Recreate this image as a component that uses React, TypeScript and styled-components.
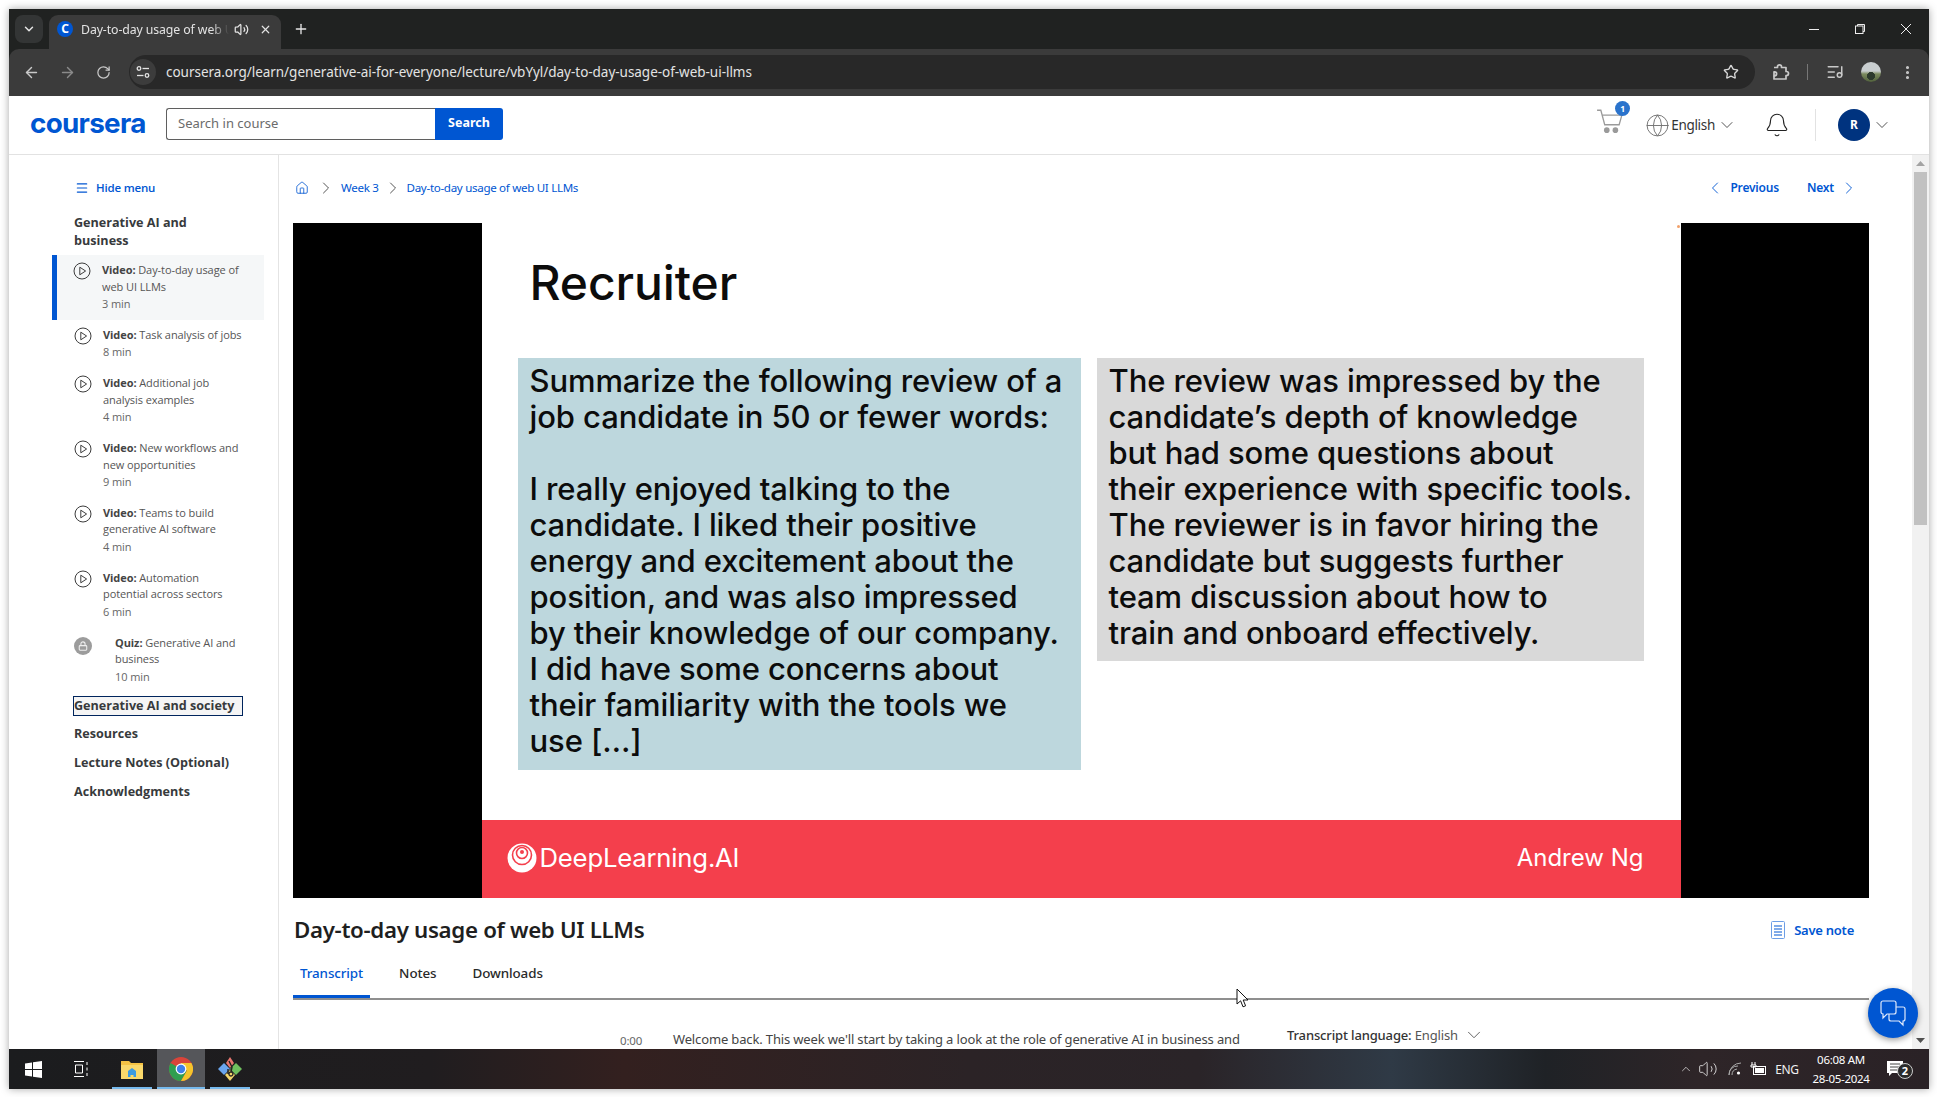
import React from "react";
import styled, { createGlobalStyle } from "styled-components";
import {
  ArrowLeft, ArrowRight, RotateCw, Star, ListMusic, MoreVertical, ChevronDown,
  ChevronRight, ChevronLeft, Plus, X, Volume2, Menu, Globe, Bell, Home, ChevronUp, Lock,
} from "lucide-react";

const Global = createGlobalStyle`
  html, body { margin: 0; padding: 0; background: #fff; overflow: hidden; }
  * { box-sizing: border-box; }
  body { font-family: "Open Sans", "Noto Sans", sans-serif; }
`;
const Page = styled.div`width:1937px;height:1097px;padding:9px 8px 8px 9px;background:#fff;`;
const Win = styled.div`
  position:relative;width:1920px;height:1080px;display:flex;flex-direction:column;overflow:hidden;
  box-shadow:0 0 8px rgba(0,0,0,.35);background:#202221;
`;
/* ---------- browser chrome ---------- */
const TabStrip = styled.div`height:40px;flex:none;display:flex;align-items:flex-start;padding:6px 0 0 6px;background:#202221;color:#e6e6e6;`;
const TabList = styled.div`width:28px;height:28px;border-radius:8px;background:#333535;display:flex;align-items:center;justify-content:center;margin-right:6px;`;
const Tab = styled.div`width:232px;height:34px;background:#3b3b3b;border-radius:9px 9px 0 0;display:flex;align-items:center;padding:0 0 6px 8px;font:12.3px "Noto Sans",sans-serif;color:#e3e3e3;`;
const Favicon = styled.span`width:16px;height:16px;border-radius:50%;background:#0056d2;color:#fff;font:700 12px/16px "Noto Sans",sans-serif;text-align:center;flex:none;`;
const TabTitle = styled.span`width:148px;margin-left:8px;white-space:nowrap;letter-spacing:-.1px;-webkit-mask-image:linear-gradient(90deg,#000 88%,transparent);`;
const TabBtn = styled.span`display:flex;width:24px;justify-content:center;`;
const NewTab = styled.span`display:flex;margin:6px 0 0 12px;`;
const WinControls = styled.div`margin:-6px 0 0 auto;display:flex;`;
const WinControl = styled.div`width:46px;height:40px;display:flex;align-items:center;justify-content:center;`;
const Toolbar = styled.div`height:47px;flex:none;background:#3b3b3b;display:flex;align-items:center;padding:0 4px 1px;border-radius:10px 10px 0 0;color:#c9c9c9;`;
const ToolBtn = styled.span<{ $dim?: boolean; $gap?: number }>`width:36px;height:36px;display:flex;align-items:center;justify-content:center;color:${p => (p.$dim ? "#8a8a8a" : "#c9c9c9")};flex:none;margin-left:${p => p.$gap ?? 0}px;`;
const Address = styled.div`flex:1;height:34px;margin-left:8px;background:#282828;border-radius:17px;display:flex;align-items:center;padding-left:1px;color:#e3e3e3;`;
const SiteChip = styled.span`width:26px;height:26px;border-radius:50%;background:#3c3c3c;display:flex;align-items:center;justify-content:center;flex:none;`;
const Url = styled.span`margin-left:10px;font:13.5px "Noto Sans",sans-serif;white-space:nowrap;color:#e3e3e3;letter-spacing:-.03px;`;
const AddrStar = styled.span`margin-left:auto;margin-right:16px;display:flex;color:#d8d8d8;`;
const ToolSep = styled.span`width:1px;height:16px;background:#777;margin:0 9px 0 8px;flex:none;`;
const ProfilePic = styled.span`width:20px;height:20px;border-radius:50%;background:radial-gradient(circle at 50% 70%,#2d3a2d 0 22%,transparent 24%),linear-gradient(#c9ced0 0 45%,#7b8a5e 60%,#50603c);`;
/* ---------- Coursera header ---------- */
const SiteHeader = styled.header`height:59px;flex:none;background:#fff;border-bottom:1.5px solid #e2e2e2;display:flex;align-items:center;padding:0 37px 0 22px;`;
const Logo = styled.div`width:135px;font:700 27.8px/30px "Inter",sans-serif;letter-spacing:-.7px;color:#0056d2;margin:-5px 0 0 -1px;flex:none;`;
const SearchInput = styled.div`width:269px;height:32px;border:1px solid #5f5f5f;border-right:0;border-radius:3px 0 0 3px;padding-left:11px;font:13px/29px "Noto Sans",sans-serif;color:#6b6b6b;margin:0 0 3px 1px;`;
const SearchBtn = styled.div`width:68px;height:32px;background:#0056d2;color:#fff;border-radius:0 3px 3px 0;font:700 12.5px/30px "Noto Sans",sans-serif;text-align:center;margin-bottom:3px;`;
const HeadRight = styled.div`margin-left:auto;display:flex;align-items:center;color:#333;`;
const CartWrap = styled.div`position:relative;width:28px;height:28px;margin-top:-9px;`;
const CartBadge = styled.span`position:absolute;left:19px;top:-6px;width:15px;height:15px;border-radius:50%;background:#2a73cc;color:#fff;font:700 8.5px/15px "Noto Sans",sans-serif;text-align:center;`;
const GlobeIcon = styled.span`display:flex;margin-left:21px;color:#6f6f6f;`;
const Lang = styled.span`font:13.5px "Noto Sans",sans-serif;margin-left:1px;letter-spacing:-.3px;color:#333;`;
const SmallChevron = styled.span`display:flex;margin-left:2px;color:#333;`;
const BellIcon = styled.span`display:flex;margin-left:27px;color:#222;`;
const HeadDivider = styled.span`width:1px;height:32px;background:#e2e2e2;margin:0 22px 0 25px;`;
const Avatar = styled.span`width:32px;height:32px;border-radius:50%;background:#00337f;color:#fff;font:700 12px/32px "Noto Sans",sans-serif;text-align:center;`;
/* ---------- main ---------- */
const Main = styled.div`flex:1;min-height:0;display:flex;background:#fff;`;
const Sidebar = styled.aside`width:270px;flex:none;border-right:1px solid #e4e4e4;padding:24px 0 0 43px;overflow:hidden;`;
const HideMenu = styled.div`display:flex;align-items:center;height:18px;padding-left:23px;color:#0056d2;font:600 11.5px/18px "Open Sans",sans-serif;gap:7px;letter-spacing:-.18px;`;
const ModuleHead = styled.div`margin:17px 0 5px 22px;font:700 12.6px/18px "Open Sans",sans-serif;color:#373a3c;`;
const Row = styled.div<{ $active?: boolean }>`
  display:flex;width:212px;padding:7px 0 7px ${p => (p.$active ? 16 : 22)}px;
  ${p => (p.$active ? "border-left:5px solid #0056d2;background:#f5f7f8;" : "")}
`;
const PlayMark = styled.span`flex:none;width:18px;height:18px;display:flex;`;
const LockMark = styled.span`flex:none;width:18px;height:18px;border-radius:50%;background:#9c9c9c;color:#eee;display:flex;align-items:center;justify-content:center;margin-top:2px;`;
const RowText = styled.div<{ $wide?: boolean }>`margin-left:${p => (p.$wide ? 23 : 11)}px;font:11px/16.5px "Open Sans",sans-serif;color:#555;white-space:nowrap;letter-spacing:-.08px;`;
const RowType = styled.b`font-weight:700;color:#444;`;
const RowTime = styled.div`line-height:17.85px;color:#666;`;
const FocusSection = styled.div`margin:3.5px 0 3px 21px;width:170px;height:20px;border:1px solid #00255d;background:#f5f5f5;font:700 12.6px/18px "Open Sans",sans-serif;color:#373a3c;white-space:nowrap;`;
const Section = styled.div`margin-left:22px;height:29px;font:700 12.6px/29px "Open Sans",sans-serif;color:#373a3c;white-space:nowrap;`;
const Content = styled.main`flex:1;min-width:0;padding:0 43px 0 14px;overflow:hidden;position:relative;`;
const Crumbs = styled.nav`height:68px;display:flex;align-items:center;padding:0 10px 3px 2px;font:11.6px "Noto Sans",sans-serif;color:#0056d2;letter-spacing:-.32px;`;
const CrumbIcon = styled.span`display:flex;`;
const CrumbSep = styled.span<{ $l: number; $r: number }>`display:flex;margin:0 ${p => p.$r}px 0 ${p => p.$l}px;color:#444;`;
const Pager = styled.span<{ $first?: boolean }>`display:flex;align-items:center;gap:5px;font:600 12px "Noto Sans",sans-serif;margin-left:${p => (p.$first ? "auto" : "28px")};letter-spacing:-.2px;`;
const Player = styled.div`height:675px;background:#000;display:flex;justify-content:center;`;
const Slide = styled.div`position:relative;width:1199px;height:100%;background:#fff;display:flex;flex-direction:column;color:#0c0c0c;font-family:"Inter",sans-serif;`;
const Dot = styled.span`position:absolute;right:1px;top:2px;width:3px;height:3px;border-radius:50%;background:#f2a06a;`;
const SlideTitle = styled.h2`margin:0;padding:33px 0 0 48px;height:135px;font:500 48px/54px "Inter",sans-serif;letter-spacing:-.1px;`;
const Boxes = styled.div`display:flex;align-items:flex-start;padding-left:36px;gap:16px;`;
const SlideBox = styled.div<{ $w: number; $h: number; $bg: string }>`
  width:${p => p.$w}px;height:${p => p.$h}px;background:${p => p.$bg};padding:5px 0 0 12px;
  font:500 31px/36px "Inter",sans-serif;white-space:nowrap;letter-spacing:-.1px;
`;
const SlideLine = styled.div`min-height:36px;`;
const Band = styled.div`margin-top:auto;height:78px;background:#f43f4c;color:#fff;display:flex;align-items:center;padding:0 37px 3px 25px;font:400 25.7px "Inter",sans-serif;`;
const BandName = styled.span`margin-left:auto;font-size:24px;`;
const BandBrand = styled.span`margin-left:3px;letter-spacing:-.2px;`;
const TitleRow = styled.div`height:66px;display:flex;align-items:center;padding:0 15px 3px 0;`;
const VideoTitle = styled.h1`margin:0 0 0 1px;font:600 22.3px "Noto Sans",sans-serif;color:#1f1f1f;letter-spacing:-.33px;`;
const SaveNote = styled.span`margin-left:auto;display:flex;align-items:center;gap:9px;color:#0056d2;font:600 13px "Noto Sans",sans-serif;letter-spacing:-.25px;`;
const TabBar = styled.div`height:36px;display:flex;border-bottom:2px solid #8f8f8f;`;
const PageTab = styled.div<{ $active?: boolean }>`
  height:34px;padding:0 7px;margin-right:22px;font:500 13.4px/18px "Noto Sans",sans-serif;letter-spacing:-.1px;
  color:${p => (p.$active ? "#0056d2" : "#2a2a2a")};
  border-bottom:3px solid ${p => (p.$active ? "#0056d2" : "transparent")};
`;
const TranscriptRow = styled.div`display:flex;padding:30px 0 0 327px;white-space:nowrap;font:13px/18px "Noto Sans",sans-serif;color:#444;letter-spacing:-.145px;`;
const Stamp = styled.span`width:53px;font-size:11.5px;color:#666;padding-top:2px;`;
const Line = styled.span`width:614px;`;
const LangPick = styled.span`display:flex;align-items:center;gap:5px;height:18px;margin-top:-4px;font-size:13px;color:#555;`;
const LangLabel = styled.b`font-weight:500;color:#333;`;
const Scroll = styled.div`width:17px;flex:none;background:#f1f1f1;display:flex;flex-direction:column;align-items:center;`;
const ScrollBtn = styled.span`height:17px;flex:none;display:flex;align-items:center;justify-content:center;`;
const Thumb = styled.span`width:13px;height:353px;background:#c1c1c1;`;
const ScrollEnd = styled(ScrollBtn)`margin-top:auto;`;
const Chat = styled.div`position:absolute;left:1859px;top:979px;width:50px;height:50px;border-radius:50%;background:#0056d2;box-shadow:0 2px 6px rgba(0,0,0,.4);display:flex;align-items:center;justify-content:center;`;
const Pointer = styled.svg`position:absolute;left:1227px;top:979px;`;
/* ---------- taskbar ---------- */
const Taskbar = styled.footer`
  height:40px;flex:none;display:flex;align-items:stretch;color:#fff;
  background:linear-gradient(90deg,#1b1c1e 0,#201d1f 22%,#33201f 32%,#2b2326 50%,#2a2428 62%,#2f3a46 72%,#1f2226 80%,#2e2528 88%,#2a2226 100%);
`;
const TaskBtn = styled.div<{ $w: number }>`width:${p => p.$w}px;display:flex;align-items:center;justify-content:center;flex:none;`;
const AppBtn = styled.div<{ $w: number; $active?: boolean }>`
  position:relative;width:${p => p.$w}px;display:flex;align-items:center;justify-content:center;flex:none;
  ${p => (p.$active ? "background:#55565a;" : "")}
  &::after{content:"";position:absolute;bottom:0;height:2px;background:#76b9ed;left:${p => (p.$active ? 0 : 5)}px;right:${p => (p.$active ? 0 : 5)}px;}
`;
const Spacer = styled.div`width:2px;flex:none;`;
const TrayItem = styled.div<{ $w: number }>`width:${p => p.$w}px;display:flex;align-items:center;justify-content:center;flex:none;font:12px "Noto Sans",sans-serif;color:#f0f0f0;letter-spacing:-.3px;`;
const TrayFirst = styled(TrayItem)`margin-left:auto;`;
const Clock = styled.div`width:60px;margin-left:6px;text-align:center;font:11.5px/19px "Noto Sans",sans-serif;padding-top:1px;flex:none;letter-spacing:-.3px;white-space:nowrap;`;
const Notif = styled.div`position:relative;width:48px;margin-right:10px;display:flex;align-items:center;justify-content:center;flex:none;`;
const NotifBadge = styled.span`position:absolute;left:26px;top:14px;width:16px;height:16px;border-radius:50%;background:#2b2b2b;border:1px solid #ccc;font:700 11px/14px "Noto Sans",sans-serif;text-align:center;`;

const lessons = [
  { type: "Video:", lines: ["Day-to-day usage of", "web UI LLMs"], time: "3 min", active: true },
  { type: "Video:", lines: ["Task analysis of jobs"], time: "8 min" },
  { type: "Video:", lines: ["Additional job", "analysis examples"], time: "4 min" },
  { type: "Video:", lines: ["New workflows and", "new opportunities"], time: "9 min" },
  { type: "Video:", lines: ["Teams to build", "generative AI software"], time: "4 min" },
  { type: "Video:", lines: ["Automation", "potential across sectors"], time: "6 min" },
  { type: "Quiz:", lines: ["Generative AI and", "business"], time: "10 min", quiz: true },
];
const leftLines = [
  "Summarize the following review of a", "job candidate in 50 or fewer words:", "",
  "I really enjoyed talking to the", "candidate. I liked their positive", "energy and excitement about the",
  "position, and was also impressed", "by their knowledge of our company.", "I did have some concerns about",
  "their familiarity with the tools we", "use […]",
];
const rightLines = [
  "The review was impressed by the", "candidate’s depth of knowledge", "but had some questions about",
  "their experience with specific tools.", "The reviewer is in favor hiring the", "candidate but suggests further",
  "team discussion about how to", "train and onboard effectively.",
];

const PlayIcon = () => (
  <svg width="18" height="18" viewBox="0 0 18 18" fill="none" stroke="#3c3c3c" strokeWidth="1">
    <circle cx="9" cy="9" r="8" />
    <path d="M6.8 5.2 L12.6 9 L6.8 12.8 Z" />
  </svg>
);

export default function App() {
  return (
    <Page>
      <Global />
      <Win>
        <TabStrip>
          <TabList><ChevronDown size={14} strokeWidth={2.5} /></TabList>
          <Tab>
            <Favicon>C</Favicon>
            <TabTitle>Day-to-day usage of web U</TabTitle>
            <TabBtn><Volume2 size={15} /></TabBtn>
            <TabBtn><X size={13} strokeWidth={2.2} /></TabBtn>
          </Tab>
          <NewTab><Plus size={16} strokeWidth={2} /></NewTab>
          <WinControls>
            <WinControl><svg width="12" height="12" viewBox="0 0 12 12" stroke="#eee" fill="none"><path d="M1 6.5h10" /></svg></WinControl>
            <WinControl><svg width="12" height="12" viewBox="0 0 12 12" stroke="#eee" fill="none"><rect x="1.5" y="3" width="7.5" height="7.5" /><path d="M3.5 3V1.5H10.5V8.5H9" /></svg></WinControl>
            <WinControl><svg width="12" height="12" viewBox="0 0 12 12" stroke="#eee" fill="none"><path d="M1 1l10 10M11 1L1 11" /></svg></WinControl>
          </WinControls>
        </TabStrip>
        <Toolbar>
          <ToolBtn><ArrowLeft size={17} /></ToolBtn>
          <ToolBtn $dim><ArrowRight size={17} /></ToolBtn>
          <ToolBtn><RotateCw size={15} /></ToolBtn>
          <Address>
            <SiteChip>
              <svg width="14" height="14" viewBox="0 0 14 14" fill="none" stroke="#e3e3e3" strokeWidth="1.3">
                <circle cx="3" cy="3.5" r="1.8" /><path d="M6.5 3.5H13" />
                <circle cx="11" cy="10.5" r="1.8" /><path d="M1 10.5H7.5" />
              </svg>
            </SiteChip>
            <Url>coursera.org/learn/generative-ai-for-everyone/lecture/vbYyl/day-to-day-usage-of-web-ui-llms</Url>
            <AddrStar><Star size={16} strokeWidth={2} /></AddrStar>
          </Address>
          <ToolBtn $gap={8}>
            <svg width="18" height="18" viewBox="0 0 18 18" fill="none" stroke="#c9c9c9" strokeWidth="1.7" strokeLinejoin="round">
              <path d="M2 4.5h3.5V3.8a2 2 0 0 1 4 0v.7H14v4h.5a2 2 0 0 1 0 4H14V16H2v-3.2" />
              <path d="M2 12.8h.6a2 2 0 0 0 0-4H2z" />
            </svg>
          </ToolBtn>
          <ToolSep />
          <ToolBtn><ListMusic size={18} /></ToolBtn>
          <ToolBtn><ProfilePic /></ToolBtn>
          <ToolBtn><MoreVertical size={17} strokeWidth={2.4} /></ToolBtn>
        </Toolbar>
        <SiteHeader>
          <Logo>coursera</Logo>
          <SearchInput>Search in course</SearchInput>
          <SearchBtn>Search</SearchBtn>
          <HeadRight>
            <CartWrap>
              <svg width="28" height="28" viewBox="0 0 26 26" fill="none" stroke="#9a9a9a" strokeWidth="1.2">
                <path d="M1 3h3.5l3.6 13.5h13.4L24 7.5H5.6" />
                <circle cx="10" cy="21.5" r="2.6" fill="#9a9a9a" stroke="none" />
                <circle cx="18" cy="21.5" r="2.6" fill="#9a9a9a" stroke="none" />
              </svg>
              <CartBadge>1</CartBadge>
            </CartWrap>
            <GlobeIcon><Globe size={25} strokeWidth={.9} /></GlobeIcon>
            <Lang>English</Lang>
            <SmallChevron><ChevronDown size={20} strokeWidth={1} /></SmallChevron>
            <BellIcon><Bell size={26} strokeWidth={1} /></BellIcon>
            <HeadDivider />
            <Avatar>R</Avatar>
            <SmallChevron><ChevronDown size={20} strokeWidth={1} /></SmallChevron>
          </HeadRight>
        </SiteHeader>
        <Main>
          <Sidebar>
            <HideMenu><Menu size={14} strokeWidth={2} />Hide menu</HideMenu>
            <ModuleHead>Generative AI and<br />business</ModuleHead>
            {lessons.map((l, i) => (
              <Row key={i} $active={l.active}>
                {l.quiz ? <LockMark><Lock size={10} strokeWidth={2.6} /></LockMark> : <PlayMark><PlayIcon /></PlayMark>}
                <RowText $wide={l.quiz}>
                  <RowType>{l.type}</RowType> {l.lines[0]}
                  {l.lines[1] && <><br />{l.lines[1]}</>}
                  <RowTime>{l.time}</RowTime>
                </RowText>
              </Row>
            ))}
            <FocusSection>Generative AI and society</FocusSection>
            <Section>Resources</Section>
            <Section>Lecture Notes (Optional)</Section>
            <Section>Acknowledgments</Section>
          </Sidebar>
          <Content>
            <Crumbs>
              <CrumbIcon><Home size={14} strokeWidth={1.4} /></CrumbIcon>
              <CrumbSep $l={7} $r={5}><ChevronRight size={20} strokeWidth={1.1} /></CrumbSep>
              <span>Week 3</span>
              <CrumbSep $l={4} $r={4}><ChevronRight size={20} strokeWidth={1.1} /></CrumbSep>
              <span>Day-to-day usage of web UI LLMs</span>
              <Pager $first><ChevronLeft size={20} strokeWidth={1.1} />Previous</Pager>
              <Pager>Next<ChevronRight size={20} strokeWidth={1.1} /></Pager>
            </Crumbs>
            <Player>
              <Slide>
                <Dot />
                <SlideTitle>Recruiter</SlideTitle>
                <Boxes>
                  <SlideBox $w={563} $h={412} $bg="#bdd7dd">
                    {leftLines.map((t, i) => <SlideLine key={i}>{t}</SlideLine>)}
                  </SlideBox>
                  <SlideBox $w={547} $h={303} $bg="#d9d9d9">
                    {rightLines.map((t, i) => <SlideLine key={i}>{t}</SlideLine>)}
                  </SlideBox>
                </Boxes>
                <Band>
                  <svg width="30" height="30" viewBox="0 0 30 30" fill="none">
                    <circle cx="15" cy="15" r="14.5" fill="#fff" />
                    <circle cx="15" cy="12" r="9.5" fill="none" stroke="#f43f4c" strokeWidth="1.6" />
                    <circle cx="15" cy="10" r="5.5" fill="none" stroke="#f43f4c" strokeWidth="1.6" />
                    <circle cx="15" cy="9" r="2" fill="#f43f4c" />
                  </svg>
                  <BandBrand>DeepLearning.AI</BandBrand>
                  <BandName>Andrew Ng</BandName>
                </Band>
              </Slide>
            </Player>
            <TitleRow>
              <VideoTitle>Day-to-day usage of web UI LLMs</VideoTitle>
              <SaveNote>
                <svg width="14" height="18" viewBox="0 0 14 18" fill="none" stroke="#0056d2">
                  <rect x=".5" y=".5" width="13" height="17" rx="1" stroke="#6c9ee6" />
                  <path d="M3 5h8M3 8h8M3 11h8M3 14h8" />
                </svg>
                Save note
              </SaveNote>
            </TitleRow>
            <TabBar>
              <PageTab $active>Transcript</PageTab>
              <PageTab>Notes</PageTab>
              <PageTab>Downloads</PageTab>
            </TabBar>
            <TranscriptRow>
              <Stamp>0:00</Stamp>
              <Line>Welcome back. This week we'll start by taking a look at the role of generative AI in business and</Line>
              <LangPick><span><LangLabel>Transcript language:</LangLabel> English</span><ChevronDown size={22} strokeWidth={1} /></LangPick>
            </TranscriptRow>
          </Content>
          <Scroll>
            <ScrollBtn><svg width="9" height="5" viewBox="0 0 9 5"><path d="M4.5 0L9 5H0z" fill="#a3a3a3" /></svg></ScrollBtn>
            <Thumb />
            <ScrollEnd><svg width="9" height="5" viewBox="0 0 9 5"><path d="M0 0h9L4.5 5z" fill="#505050" /></svg></ScrollEnd>
          </Scroll>
        </Main>
        <Taskbar>
          <TaskBtn $w={48}>
            <svg width="17" height="17" viewBox="0 0 17 17" fill="#fff"><path d="M0 2.5L7 1.5V8H0zM8 1.3L17 0V8H8zM0 9H7V15.5L0 14.5zM8 9H17V17L8 15.7z" /></svg>
          </TaskBtn>
          <TaskBtn $w={48}>
            <svg width="16" height="16" viewBox="0 0 16 16" fill="none" stroke="#fff"><path d="M1 .5h10M1 15.5h10M2.5 4h7v8h-7z" /><path d="M14 1v3M14 6.5v3M14 12v3" /></svg>
          </TaskBtn>
          <Spacer />
          <AppBtn $w={50}>
            <svg width="22" height="20" viewBox="0 0 22 20">
              <path d="M0 2h8l2 2h12v16H0z" fill="#f6c344" />
              <path d="M0 6h22v14H0z" fill="#fbd96b" />
              <path d="M7 18v-6l4-3 4 3v6z" fill="#3d9be0" />
              <path d="M9.5 20v-4h3v4z" fill="#fbd96b" />
            </svg>
          </AppBtn>
          <AppBtn $w={48} $active>
            <svg width="24" height="24" viewBox="0 0 24 24">
              <circle cx="12" cy="12" r="12" fill="#d9443a" />
              <path d="M12 12L1.6 6A12 12 0 0 0 12 24L18 13.5z" fill="#2f9e4f" />
              <path d="M12 12l6 1.5L12 24A12 12 0 0 0 22.4 6H12z" fill="#f5c42c" />
              <circle cx="12" cy="12" r="5.4" fill="#fff" />
              <circle cx="12" cy="12" r="4.2" fill="#3f80ea" />
            </svg>
          </AppBtn>
          <AppBtn $w={50}>
            <svg width="26" height="26" viewBox="0 0 26 26">
              <path d="M7 7L1 13l6 6 6-6z" fill="#6aa5ee" />
              <path d="M19 7l-6 6 6 6 6-6z" fill="#6fbf5e" />
              <path d="M13 1L9 7l4 5 4-5z" fill="#e8766f" />
              <path d="M13 14l-5 5 5 6 5-6z" fill="#f2d56b" />
              <path d="M12 5l3 6-1 5M11 13v5M14 16a2 2 0 1 1-.1 0" fill="none" stroke="#222" strokeWidth="1.4" />
            </svg>
          </AppBtn>
          <TrayFirst $w={14}><ChevronUp size={18} strokeWidth={1.2} /></TrayFirst>
          <TrayItem $w={30}><Volume2 size={20} strokeWidth={1} /></TrayItem>
          <TrayItem $w={24}>
            <svg width="14" height="14" viewBox="0 0 14 14" fill="none" stroke="#aaa"><path d="M1 13A12 12 0 0 1 13 1M1 13A8.5 8.5 0 0 1 10 4M4 13a6 6 0 0 1 5-6" /><circle cx="10.5" cy="11" r="1.6" fill="#fff" stroke="none" /></svg>
          </TrayItem>
          <TrayItem $w={22}>
            <svg width="17" height="14" viewBox="0 0 17 14" fill="none" stroke="#fff"><rect x="3.5" y="4.5" width="12" height="8" /><rect x="5" y="6" width="9" height="5" fill="#fff" stroke="none" /><path d="M2 0v3M5 0v3M1 3h5v2H1z" /></svg>
          </TrayItem>
          <TrayItem $w={36}>ENG</TrayItem>
          <Clock>06:08 AM<br />28-05-2024</Clock>
          <Notif>
            <svg width="16" height="17" viewBox="0 0 16 17"><path d="M0 0h16v12H5l-3 3v-3H0z" fill="#fff" /><path d="M3 3h10M3 6h10M3 9h7" stroke="#444" /></svg>
            <NotifBadge>2</NotifBadge>
          </Notif>
        </Taskbar>
        <Chat>
          <svg width="28" height="28" viewBox="0 0 28 28" fill="none" stroke="#dfe9fb" strokeWidth="1.2">
            <path d="M4 2h11a2 2 0 0 1 2 2v9a2 2 0 0 1-2 2H8l-4 4v-4a2 2 0 0 1-2-2V4a2 2 0 0 1 2-2z" />
            <path d="M17 8h7a2 2 0 0 1 2 2v10a2 2 0 0 1-2 2v4l-4-4h-8a2 2 0 0 1-2-2v-5" />
          </svg>
        </Chat>
        <Pointer width="13" height="20" viewBox="0 0 13 20">
          <path d="M1 1v15l3.6-3.2 2.4 6 2.6-1-2.4-5.8H12z" fill="#fff" stroke="#111" />
        </Pointer>
      </Win>
    </Page>
  );
}
